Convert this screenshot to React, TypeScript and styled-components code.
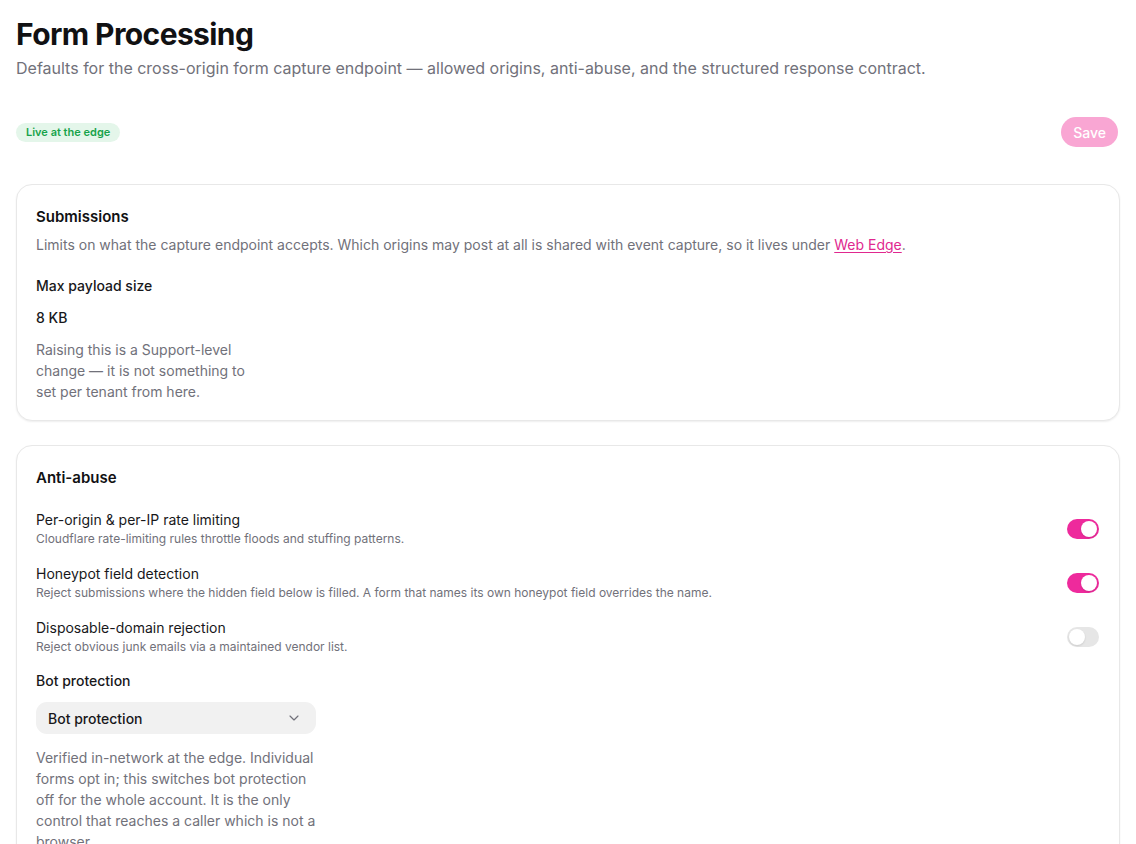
import React from 'react';
import styled, { createGlobalStyle } from 'styled-components';
import { ChevronDown } from 'lucide-react';

const GlobalStyle = createGlobalStyle`
    html, body {
        margin: 0;
        padding: 0;
        background: #ffffff;
    }
    body {
        font-family: Inter, 'Noto Sans', 'Liberation Sans', sans-serif;
        color: #18181b;
        -webkit-font-smoothing: antialiased;
    }
    * {
        box-sizing: border-box;
    }
`;

const Page = styled.main`
    padding: 16px 16px 40px;
    display: flex;
    flex-direction: column;
`;

const Header = styled.header`
    display: flex;
    flex-direction: column;
    gap: 4px;
`;

const Title = styled.h1`
    margin: 0;
    font-size: 30px;
    line-height: 36px;
    font-weight: 700;
    letter-spacing: -0.02em;
    color: #111113;
`;

const Subtitle = styled.p`
    margin: 0;
    font-size: 16px;
    line-height: 24px;
    color: #71717a;
`;

const Toolbar = styled.div`
    margin: 37px 2px 37px 0;
    height: 30px;
    display: flex;
    align-items: center;
    justify-content: space-between;
`;

const Badge = styled.span`
    display: inline-flex;
    align-items: center;
    height: 19px;
    padding: 0 10px;
    border-radius: 999px;
    background: #e4f6ea;
    color: #17a34a;
    font-size: 11px;
    font-weight: 600;
`;

const SaveButton = styled.button`
    height: 30px;
    padding: 0 12px;
    border: none;
    border-radius: 15px;
    background: #f9a6d3;
    color: #ffffff;
    font-family: inherit;
    font-size: 14px;
    font-weight: 500;
    cursor: not-allowed;
`;

const Sections = styled.div`
    display: flex;
    flex-direction: column;
    gap: 24px;
`;

const Card = styled.section`
    border: 1px solid #e8e8e8;
    border-radius: 16px;
    padding: 21px 20px 18px 19px;
    background: #ffffff;
    box-shadow: 0 1px 2px rgba(0, 0, 0, 0.07);
`;

const CardTitle = styled.h2`
    margin: 0;
    font-size: 15px;
    line-height: 22px;
    font-weight: 600;
    color: #111113;
`;

const CardDescription = styled.p`
    margin: 6px 0 0;
    font-size: 14px;
    line-height: 21px;
    color: #71717a;
`;

const Link = styled.a`
    color: #e0288f;
    text-decoration: underline;
    text-underline-offset: 2px;
`;

const Field = styled.div<{ width: number; top: number }>`
    margin-top: ${({ top }) => top}px;
    width: ${({ width }) => width}px;
    display: flex;
    flex-direction: column;
    gap: 11px;
`;

const FieldLabel = styled.div`
    font-size: 14px;
    line-height: 21px;
    font-weight: 500;
    color: #18181b;
`;

const FieldValue = styled.div`
    font-size: 14px;
    line-height: 21px;
    font-weight: 500;
    color: #18181b;
`;

const Help = styled.p`
    margin: 0;
    font-size: 14px;
    line-height: 21px;
    color: #71717a;
`;

const ToggleList = styled.div`
    margin-top: 21px;
    display: flex;
    flex-direction: column;
    gap: 17px;
`;

const ToggleRow = styled.div`
    display: flex;
    align-items: center;
    justify-content: space-between;
    gap: 24px;
`;

const RowText = styled.div`
    display: flex;
    flex-direction: column;
`;

const RowLabel = styled.span`
    font-size: 14px;
    line-height: 20px;
    color: #18181b;
`;

const RowHint = styled.span`
    margin-top: 1px;
    font-size: 12px;
    line-height: 16px;
    color: #71717a;
`;

const Track = styled.button<{ on: boolean }>`
    position: relative;
    flex: none;
    width: 32px;
    height: 20px;
    padding: 0;
    border: none;
    border-radius: 10px;
    background: ${({ on }) => (on ? '#ee2a9c' : '#e6e6e6')};
    cursor: pointer;
`;

const Knob = styled.span<{ on: boolean }>`
    position: absolute;
    top: 2px;
    left: ${({ on }) => (on ? '14px' : '2px')};
    width: 16px;
    height: 16px;
    border-radius: 50%;
    background: #ffffff;
    box-shadow: 0 1px 2px rgba(0, 0, 0, 0.12);
`;

const Select = styled.div`
    height: 32px;
    margin-bottom: 2px;
    padding: 0 14px 0 12px;
    border-radius: 11px;
    background: #f1f1f1;
    display: flex;
    align-items: center;
    justify-content: space-between;
    font-size: 14px;
    font-weight: 500;
    color: #18181b;
    cursor: pointer;
`;

const Toggle: React.FC<{ on: boolean }> = ({ on }) => (
    <Track on={on} role="switch" aria-checked={on}>
        <Knob on={on} />
    </Track>
);

const TOGGLES = [
    {
        label: 'Per-origin & per-IP rate limiting',
        hint: 'Cloudflare rate-limiting rules throttle floods and stuffing patterns.',
        on: true,
    },
    {
        label: 'Honeypot field detection',
        hint: 'Reject submissions where the hidden field below is filled. A form that names its own honeypot field overrides the name.',
        on: true,
    },
    {
        label: 'Disposable-domain rejection',
        hint: 'Reject obvious junk emails via a maintained vendor list.',
        on: false,
    },
];

export default function App() {
    return (
        <>
            <GlobalStyle />
            <Page>
                <Header>
                    <Title>Form Processing</Title>
                    <Subtitle>
                        Defaults for the cross-origin form capture endpoint — allowed origins, anti-abuse, and the
                        structured response contract.
                    </Subtitle>
                </Header>

                <Toolbar>
                    <Badge>Live at the edge</Badge>
                    <SaveButton disabled>Save</SaveButton>
                </Toolbar>

                <Sections>
                    <Card>
                        <CardTitle>Submissions</CardTitle>
                        <CardDescription>
                            Limits on what the capture endpoint accepts. Which origins may post at all is shared with
                            event capture, so it lives under <Link href="#">Web Edge</Link>.
                        </CardDescription>
                        <Field width={220} top={20}>
                            <FieldLabel>Max payload size</FieldLabel>
                            <FieldValue>8 KB</FieldValue>
                            <Help>
                                Raising this is a Support-level change — it is not something to set per tenant from
                                here.
                            </Help>
                        </Field>
                    </Card>

                    <Card>
                        <CardTitle>Anti-abuse</CardTitle>
                        <ToggleList>
                            {TOGGLES.map((t) => (
                                <ToggleRow key={t.label}>
                                    <RowText>
                                        <RowLabel>{t.label}</RowLabel>
                                        <RowHint>{t.hint}</RowHint>
                                    </RowText>
                                    <Toggle on={t.on} />
                                </ToggleRow>
                            ))}
                        </ToggleList>
                        <Field width={280} top={15}>
                            <FieldLabel>Bot protection</FieldLabel>
                            <Select>
                                Bot protection
                                <ChevronDown size={16} color="#71717a" strokeWidth={1.75} />
                            </Select>
                            <Help>
                                Verified in-network at the edge. Individual forms opt in; this switches bot protection
                                off for the whole account. It is the only control that reaches a caller which is not a
                                browser.
                            </Help>
                        </Field>
                    </Card>
                </Sections>
            </Page>
        </>
    );
}
